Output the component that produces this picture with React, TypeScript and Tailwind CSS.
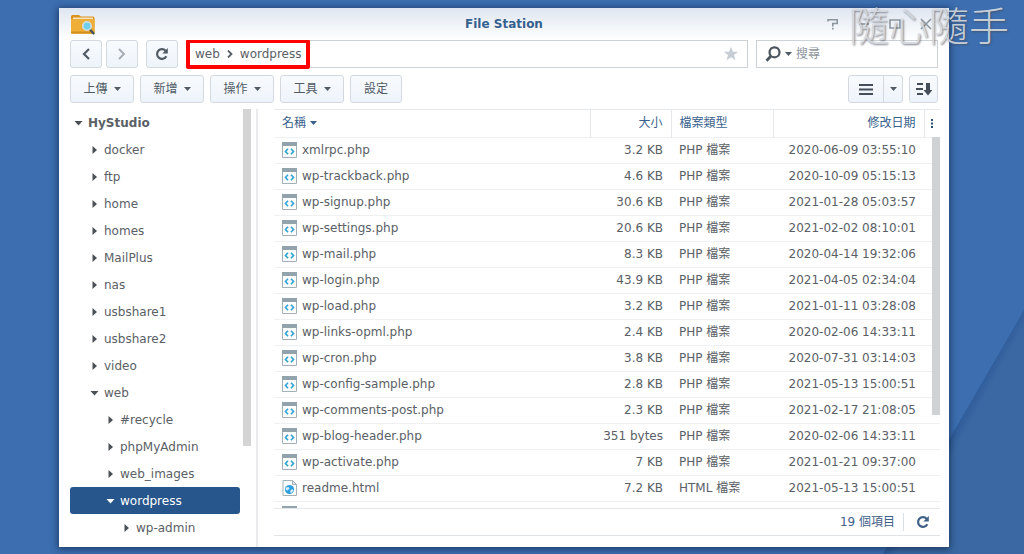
import { ReactNode } from 'react';

interface TreeNode {
  name: string;
  level: 0 | 1 | 2 | 3;
  open?: boolean;
  selected?: boolean;
}

interface FileItem {
  name: string;
  size: string;
  type: 'PHP' | 'HTML';
  modified: string;
}

const tree: TreeNode[] = [
  { name: 'HyStudio', level: 0, open: true },
  { name: 'docker', level: 1 },
  { name: 'ftp', level: 1 },
  { name: 'home', level: 1 },
  { name: 'homes', level: 1 },
  { name: 'MailPlus', level: 1 },
  { name: 'nas', level: 1 },
  { name: 'usbshare1', level: 1 },
  { name: 'usbshare2', level: 1 },
  { name: 'video', level: 1 },
  { name: 'web', level: 1, open: true },
  { name: '#recycle', level: 2 },
  { name: 'phpMyAdmin', level: 2 },
  { name: 'web_images', level: 2 },
  { name: 'wordpress', level: 2, open: true, selected: true },
  { name: 'wp-admin', level: 3 },
];

const files: FileItem[] = [
  { name: 'xmlrpc.php', size: '3.2 KB', type: 'PHP', modified: '2020-06-09 03:55:10' },
  { name: 'wp-trackback.php', size: '4.6 KB', type: 'PHP', modified: '2020-10-09 05:15:13' },
  { name: 'wp-signup.php', size: '30.6 KB', type: 'PHP', modified: '2021-01-28 05:03:57' },
  { name: 'wp-settings.php', size: '20.6 KB', type: 'PHP', modified: '2021-02-02 08:10:01' },
  { name: 'wp-mail.php', size: '8.3 KB', type: 'PHP', modified: '2020-04-14 19:32:06' },
  { name: 'wp-login.php', size: '43.9 KB', type: 'PHP', modified: '2021-04-05 02:34:04' },
  { name: 'wp-load.php', size: '3.2 KB', type: 'PHP', modified: '2021-01-11 03:28:08' },
  { name: 'wp-links-opml.php', size: '2.4 KB', type: 'PHP', modified: '2020-02-06 14:33:11' },
  { name: 'wp-cron.php', size: '3.8 KB', type: 'PHP', modified: '2020-07-31 03:14:03' },
  { name: 'wp-config-sample.php', size: '2.8 KB', type: 'PHP', modified: '2021-05-13 15:00:51' },
  { name: 'wp-comments-post.php', size: '2.3 KB', type: 'PHP', modified: '2021-02-17 21:08:05' },
  { name: 'wp-blog-header.php', size: '351 bytes', type: 'PHP', modified: '2020-02-06 14:33:11' },
  { name: 'wp-activate.php', size: '7 KB', type: 'PHP', modified: '2021-01-21 09:37:00' },
  { name: 'readme.html', size: '7.2 KB', type: 'HTML', modified: '2021-05-13 15:00:51' },
];

const indent = {
  0: 'pl-1',
  1: 'pl-5',
  2: 'pl-9',
  3: 'pl-13',
};

const buttonClasses =
  'flex h-7 items-center justify-center rounded-[3px] border border-[#d3d9de] bg-linear-to-b from-[#f8fafd] to-[#eef4fb] text-[#505a64]';

function Caret({ className = '' }: { className?: string }) {
  return (
    <svg className={className} width="7" height="4" viewBox="0 0 7 4" fill="currentColor" aria-hidden="true">
      <path d="M0 0h7L3.5 4z" />
    </svg>
  );
}

function FolderLogo() {
  return (
    <svg width="24" height="22" viewBox="0 0 24 22" aria-hidden="true">
      <path d="M0 3.500Q0 2 1.500 2H8l2 1.500h12q1.500 0 1.500 1.500v14.500q0 1-1 1H1q-1 0-1-1z" fill="#d9921c" />
      <path d="M2 4.500h20V9H2z" fill="#f4e3bd" />
      <path d="M0 6h23.500v13.500q0 1-1 1H1q-1 0-1-1z" fill="#eeae38" />
      <path d="M0 18.500h23.500v1q0 1-1 1H1q-1 0-1-1z" fill="#d48f1d" />
      <path d="M19 16.500l3.500 4" stroke="#43525c" strokeWidth="2.200" strokeLinecap="round" />
      <circle cx="16" cy="13" r="4.200" fill="#6fd0ee" stroke="#d5dde0" strokeWidth="1.600" />
    </svg>
  );
}

function RefreshIcon() {
  return (
    <svg width="14" height="14" viewBox="0 0 14 14" fill="none" aria-hidden="true">
      <path d="M11.300 9.300A4.900 4.900 0 1 1 10.600 3.700" stroke="currentColor" strokeWidth="2.200" />
      <path d="M12.800 1v5.500H7.300z" fill="currentColor" />
    </svg>
  );
}

function CodeIcon() {
  return (
    <svg width="15" height="16" viewBox="0 0 15 16" fill="none" aria-hidden="true">
      <path d="M.5.500h14v15H.5z" fill="#fff" stroke="#a3b0b8" />
      <path d="M0 0h15v4H0z" fill="#93a3ac" />
      <path d="M6 6.700L3.500 9.500 6 12.300M9 6.700l2.500 2.800L9 12.300" stroke="#35a4d4" strokeWidth="1.700" />
    </svg>
  );
}

function HtmlIcon() {
  return (
    <svg width="15" height="16" viewBox="0 0 15 16" fill="none" aria-hidden="true">
      <path d="M1 .500h9.500l4 4v11H1z" fill="#fff" stroke="#a3b0b8" />
      <path d="M10.500.500v4h4z" fill="#dfe5e8" stroke="#a3b0b8" />
      <circle cx="7.500" cy="9.500" r="4.600" fill="#2f9fe0" />
      <path d="M4 7.500l2.500-.5 1 1.500-2 2-1.800-.8zM8.500 10l2.500-.8.500 1.300-2 2.500-1.300-.8z" fill="#d4effb" />
    </svg>
  );
}

function MenuButton({ children }: { children: ReactNode }) {
  return (
    <button type="button" className={`${buttonClasses} w-16 gap-1.5`}>
      {children}
      <Caret />
    </button>
  );
}

function TitleBar() {
  return (
    <header className="relative flex h-8 shrink-0 items-center justify-between bg-linear-to-b from-[#dfe6f1] to-white pl-3 pr-4">
      <FolderLogo />
      <h1 className="absolute inset-x-0 text-center text-[12px] font-bold text-[#35618e]">File Station</h1>
      <div className="relative flex gap-[17px] text-[#8d969f]">
        <button type="button" aria-label="Help">
          <svg width="14" height="14" viewBox="0 0 14 14" fill="none" stroke="currentColor" strokeWidth="1.600">
            <path d="M2 4.500V2.800h9.200v3.700H6.800v3M6.800 10.800v1.800" />
          </svg>
        </button>
        <button type="button" aria-label="Minimize">
          <svg width="14" height="14" viewBox="0 0 14 14" stroke="currentColor" strokeWidth="1.600">
            <path d="M2 7h10" />
          </svg>
        </button>
        <button type="button" aria-label="Maximize">
          <svg width="14" height="14" viewBox="0 0 14 14" fill="none" stroke="currentColor" strokeWidth="1.600">
            <path d="M2 3h10v8H2z" />
          </svg>
        </button>
        <button type="button" aria-label="Close">
          <svg width="14" height="14" viewBox="0 0 14 14" stroke="currentColor" strokeWidth="1.600">
            <path d="M2 2l10 10M12 2L2 12" />
          </svg>
        </button>
      </div>
    </header>
  );
}

function AddressBar() {
  return (
    <div className="flex h-7 shrink-0">
      <button type="button" aria-label="Back" className={`${buttonClasses} w-8`}>
        <svg width="8" height="12" viewBox="0 0 8 12" fill="none" stroke="currentColor" strokeWidth="2.200">
          <path d="M7 1L2 6l5 5" />
        </svg>
      </button>
      <button type="button" aria-label="Forward" className={`${buttonClasses} ml-1 w-8`}>
        <svg width="8" height="12" viewBox="0 0 8 12" fill="none" stroke="#a3aab1" strokeWidth="1.800">
          <path d="M1 1l5 5-5 5" />
        </svg>
      </button>
      <button type="button" aria-label="Refresh" className={`${buttonClasses} ml-2 w-8`}>
        <RefreshIcon />
      </button>
      <div className="ml-2 flex flex-1 items-center justify-between border border-[#cdd2d6] pr-2">
        <nav className="-my-0.5 -ml-px flex h-[30px] items-center gap-[7px] rounded-[2px] border-4 border-[#fe0000] pr-1 pl-[5px]">
          <button type="button">web</button>
          <svg width="6" height="8" viewBox="0 0 6 8" fill="none" stroke="#555d65" strokeWidth="1.800" aria-hidden="true">
            <path d="M1 .5L4.500 4 1 7.500" />
          </svg>
          <button type="button">wordpress</button>
        </nav>
        <button type="button" aria-label="Favorite">
          <svg width="16" height="16" viewBox="0 0 16 16" fill="#c7cdd5">
            <path d="M8 .8l1.900 5h5.300l-4.200 3.300 1.500 5.200L8 11.200l-4.500 3.100L5 9.100.8 5.800h5.300z" />
          </svg>
        </button>
      </div>
      <label className="ml-2 flex w-[182px] items-center border border-[#cdd2d6] pl-2">
        <svg width="16" height="16" viewBox="0 0 16 16" fill="none" stroke="#4c555e" aria-hidden="true">
          <circle cx="9.500" cy="6.300" r="5" strokeWidth="2.200" />
          <path d="M6 10l-4.500 4.700" strokeWidth="2.800" />
        </svg>
        <Caret className="ml-1 text-[#505a64]" />
        <input
          type="text"
          aria-label="搜尋"
          placeholder="搜尋"
          className="ml-1 min-w-0 flex-1 outline-none placeholder:text-[#8d959c]"
        />
      </label>
    </div>
  );
}

function Toolbar() {
  return (
    <div className="mt-[7px] flex h-7 shrink-0 gap-1.5">
      <MenuButton>上傳</MenuButton>
      <MenuButton>新增</MenuButton>
      <MenuButton>操作</MenuButton>
      <MenuButton>工具</MenuButton>
      <button type="button" className={`${buttonClasses} w-[52px]`}>
        設定
      </button>
      <div className="ml-auto flex">
        <button type="button" aria-label="List view" className={`${buttonClasses} w-9 rounded-r-none`}>
          <svg width="14" height="11" viewBox="0 0 14 11" fill="#454e58">
            <path d="M0 0h14v2H0zM0 4.500h14v2H0zM0 9h14v2H0z" />
          </svg>
        </button>
        <button type="button" aria-label="View mode" className={`${buttonClasses} -ml-px w-5 rounded-l-none`}>
          <Caret />
        </button>
      </div>
      <button type="button" aria-label="Sort" className={`${buttonClasses} w-[29px]`}>
        <svg width="16" height="13" viewBox="0 0 16 13" fill="#454e58">
          <path d="M1 0h6v2H1zM0 5h7v2H0zM1 10h6v2H1zM10 0h4v7h2.500L12 12.500 7.500 7H10z" />
        </svg>
      </button>
    </div>
  );
}

function FolderTree() {
  return (
    <aside className="flex w-[188px] shrink-0 gap-[3px] border-r-2 border-[#e9ebed]">
      <ul className="w-[170px] overflow-hidden">
        {tree.map((node) => (
          <li key={node.name}>
            <button
              type="button"
              className={`flex h-[27px] w-full items-center gap-1 rounded-[3px] ${indent[node.level]} ${
                node.selected ? 'bg-[#27568c] text-white' : 'text-[#5a6066]'
              } ${node.level === 0 ? 'font-bold' : ''}`}
            >
              <svg width="10" height="10" viewBox="0 0 10 10" aria-hidden="true" fill={node.selected ? '#fff' : '#4a5056'}>
                <path d={node.open ? 'M.5 3h8L4.500 7.500z' : 'M2.500 1v8L7 5z'} />
              </svg>
              {node.name}
            </button>
          </li>
        ))}
      </ul>
      <div className="h-[77%] w-2 bg-[#d4d4d4]" />
    </aside>
  );
}

function FileTable() {
  return (
    <div className="relative min-h-0 flex-1 overflow-hidden border-y border-[#e6e9ec]">
      <table className="w-full table-fixed border-collapse">
        <thead>
          <tr className="h-[27px] border-b border-[#eef0f2] text-[#38618d]">
            <th className="border-r border-[#e6e9ec] pl-2 text-left font-normal">
              <button type="button" className="flex items-center gap-1">
                名稱
                <Caret />
              </button>
            </th>
            <th className="w-[81px] border-r border-[#e6e9ec] pr-2 text-right font-normal">大小</th>
            <th className="w-[102px] border-r border-[#e6e9ec] pl-2 text-left font-normal">檔案類型</th>
            <th className="w-[151px] border-r border-[#e6e9ec] pr-2 text-right font-normal">修改日期</th>
            <th className="w-4">
              <button type="button" aria-label="Columns" className="flex w-full justify-center">
                <svg width="2" height="9" viewBox="0 0 2 9" fill="#2c4f78">
                  <path d="M0 0h2v2H0zM0 3.500h2v2H0zM0 7h2v2H0z" />
                </svg>
              </button>
            </th>
          </tr>
        </thead>
        <tbody>
          {files.map((file) => (
            <tr key={file.name} className="h-[26px] border-b border-[#eef0f2]">
              <td className="pl-2">
                <div className="flex items-center gap-[5px]">
                  {file.type === 'PHP' ? <CodeIcon /> : <HtmlIcon />}
                  {file.name}
                </div>
              </td>
              <td className="pr-2 text-right">{file.size}</td>
              <td className="pl-2">{file.type} 檔案</td>
              <td className="pr-2 text-right whitespace-nowrap">{file.modified}</td>
              <td />
            </tr>
          ))}
          <tr className="h-[26px]">
            <td className="pl-2" colSpan={5}>
              <CodeIcon />
            </td>
          </tr>
        </tbody>
      </table>
      <div className="absolute top-[27px] right-0 h-[278px] w-2 bg-[#d0d1d3]" />
    </div>
  );
}

function StatusBar() {
  return (
    <footer className="flex h-[27px] shrink-0 items-center justify-end gap-2 border-b border-[#dfe3e6] pr-2.5 text-[#3f6087]">
      <span>19 個項目</span>
      <span className="h-4.5 border-l border-[#dadfe3]" />
      <button type="button" aria-label="Reload list" className="ml-1">
        <RefreshIcon />
      </button>
    </footer>
  );
}

export default function App() {
  return (
    <div className="relative flex h-screen overflow-hidden bg-[#3c6eb0] pt-2 pr-[75px] pb-[7px] pl-[59px] font-['DejaVu_Sans','Noto_Sans_CJK_TC',sans-serif] text-[12px] leading-4 text-[#5a6066]">
      <svg className="absolute right-0 bottom-0" width="141" height="244" viewBox="0 0 141 244" aria-hidden="true">
        <defs>
          <linearGradient id="fold" gradientUnits="userSpaceOnUse" x1="70" y1="122" x2="79" y2="127">
            <stop offset="0" stopColor="#2f5c9a" />
            <stop offset="1" stopColor="#3b68a3" />
          </linearGradient>
        </defs>
        <path d="M141 0v244H0z" fill="url(#fold)" />
      </svg>

      <main className="relative flex min-w-0 flex-1 flex-col bg-white shadow-[0_1px_7px_1px_rgba(10,30,60,0.65)]">
        <TitleBar />
        <div className="flex min-h-0 flex-1 flex-col pl-[11px]">
          <div className="pr-[11px]">
            <AddressBar />
            <Toolbar />
          </div>
          <div className="mt-1.5 flex min-h-0 flex-1">
            <FolderTree />
            <section className="ml-4 flex min-w-0 flex-1 flex-col pr-[9px] pb-[11px]">
              <FileTable />
              <StatusBar />
            </section>
          </div>
        </div>
      </main>

      <p className="pointer-events-none absolute top-0 right-[15px] font-['Noto_Sans_CJK_TC',sans-serif] text-[40px] leading-12 font-light text-[#d9dce1]/90 text-shadow-[1px_1px_2px_rgba(70,75,85,0.7)]">
        隨心隨手
      </p>
    </div>
  );
}
